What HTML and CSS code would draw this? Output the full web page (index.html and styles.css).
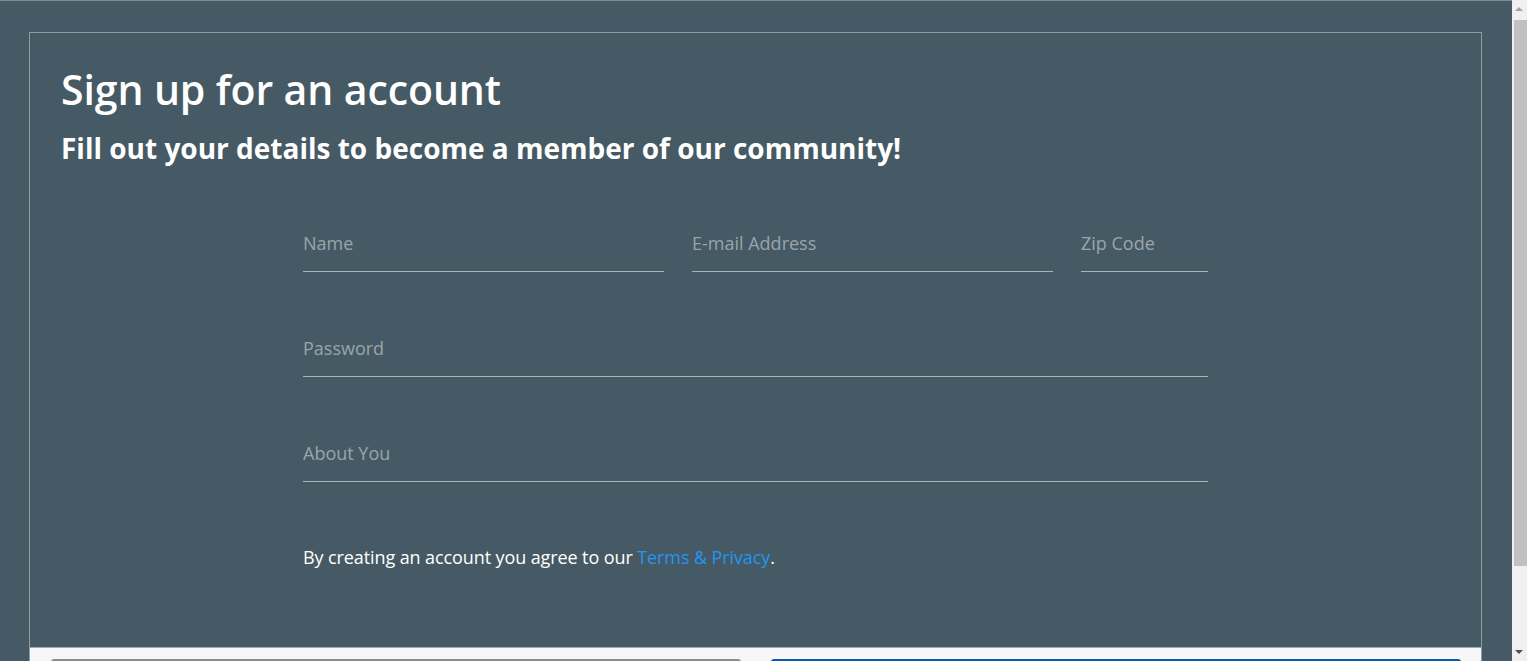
FILE: index.html
```html
<!DOCTYPE html>
<html lang="en">
<head>
<meta charset="utf-8">
<title>Sign up</title>
<link rel="stylesheet" href="styles.css">
</head>
<body>
<div class="page">
  <form class="card">
    <div class="card-body">
      <h1 class="title">Sign up for an account</h1>
      <h2 class="subtitle">Fill out your details to become a member of our community!</h2>
      <div class="fields">
        <div class="row">
          <input class="field field-name" type="text" placeholder="Name">
          <input class="field field-email" type="email" placeholder="E-mail Address">
          <input class="field field-zip" type="text" placeholder="Zip Code">
        </div>
        <div class="row">
          <input class="field" type="password" placeholder="Password">
        </div>
        <div class="row">
          <input class="field" type="text" placeholder="About You">
        </div>
        <p class="terms">By creating an account you agree to our <a href="#" class="link">Terms &amp; Privacy</a>.</p>
      </div>
    </div>
    <div class="card-footer">
      <button type="button" class="btn btn-cancel">Cancel</button>
      <button type="submit" class="btn btn-signup">Sign Up</button>
    </div>
  </form>
</div>
<div class="scrollbar">
  <div class="sb-arrow sb-up"></div>
  <div class="sb-track"><div class="sb-thumb"></div></div>
  <div class="sb-arrow sb-down"></div>
</div>
</body>
</html>
```
FILE: styles.css
```css
html, body {
  margin: 0;
  padding: 0;
  height: 100%;
  overflow: hidden;
}
body {
  background: #455a64;
  font-family: "Open Sans", "Noto Sans", sans-serif;
  color: #ffffff;
}
.page {
  box-sizing: border-box;
  width: 1512px;
  border-top: 1px solid #7d8b94;
  padding: 31px 30px 0 29px;
}
.card {
  border: 1px solid #8f9ca4;
  display: flex;
  flex-direction: column;
}
.card-body {
  padding: 28px 31px 0 31px;
  height: 614px;
  box-sizing: border-box;
}
.title {
  margin: 0;
  font-size: 41px;
  font-weight: 600;
  line-height: 56px;
  letter-spacing: -0.1px;
}
.subtitle {
  margin: 13px 0 0 0;
  font-size: 28px;
  font-weight: 700;
  line-height: 36px;
}
.fields {
  width: 905px;
  margin: 66px auto 0;
  display: flex;
  flex-direction: column;
  gap: 65px;
}
.row {
  display: flex;
  gap: 28px;
}
.field {
  flex: 1;
  min-width: 0;
  height: 40px;
  box-sizing: border-box;
  background: transparent;
  border: none;
  border-bottom: 1px solid #a9b3b9;
  padding: 0 0 18px 0;
  font-family: inherit;
  font-size: 18px;
  color: #ffffff;
  outline: none;
}
.field::placeholder {
  color: #9aa5ab;
}
.field-name { flex: 0 0 361px; }
.field-email { flex: 0 0 361px; }
.field-zip { flex: 0 0 127px; }
.terms {
  margin: -2px 0 0 0;
  font-size: 18px;
  line-height: 24px;
  letter-spacing: -0.1px;
  color: #ffffff;
}
.link {
  color: #2196f3;
  text-decoration: none;
}
.card-footer {
  background: #f7f7f7;
  border-top: 1px solid #a0a9ae;
  padding: 11px 20px 20px 21px;
  display: flex;
  gap: 30px;
}
.btn {
  flex: 1;
  height: 48px;
  border: none;
  border-radius: 3px;
  font-family: inherit;
  font-size: 18px;
}
.btn-cancel {
  background: #c8c8c8;
  border-top: 2px solid #8c8c8c;
  color: #000;
}
.btn-signup {
  background: #1a73c8;
  border-top: 2px solid #0b5aa8;
  color: #fff;
}
.scrollbar {
  position: fixed;
  top: 0;
  right: 0;
  width: 15px;
  height: 100%;
  background: #f0f0f0;
  display: flex;
  flex-direction: column;
}
.sb-arrow {
  height: 17px;
  position: relative;
}
.sb-up::after, .sb-down::after {
  content: "";
  position: absolute;
  left: 3px;
  border-left: 4px solid transparent;
  border-right: 4px solid transparent;
}
.sb-up::after {
  top: 7px;
  border-bottom: 4px solid #a3a3a3;
}
.sb-down::after {
  top: 6px;
  border-top: 4px solid #505050;
}
.sb-track {
  flex: 1;
  padding: 3px 0 0 2px;
}
.sb-thumb {
  width: 13px;
  height: 546px;
  background: #c1c1c1;
}
```
